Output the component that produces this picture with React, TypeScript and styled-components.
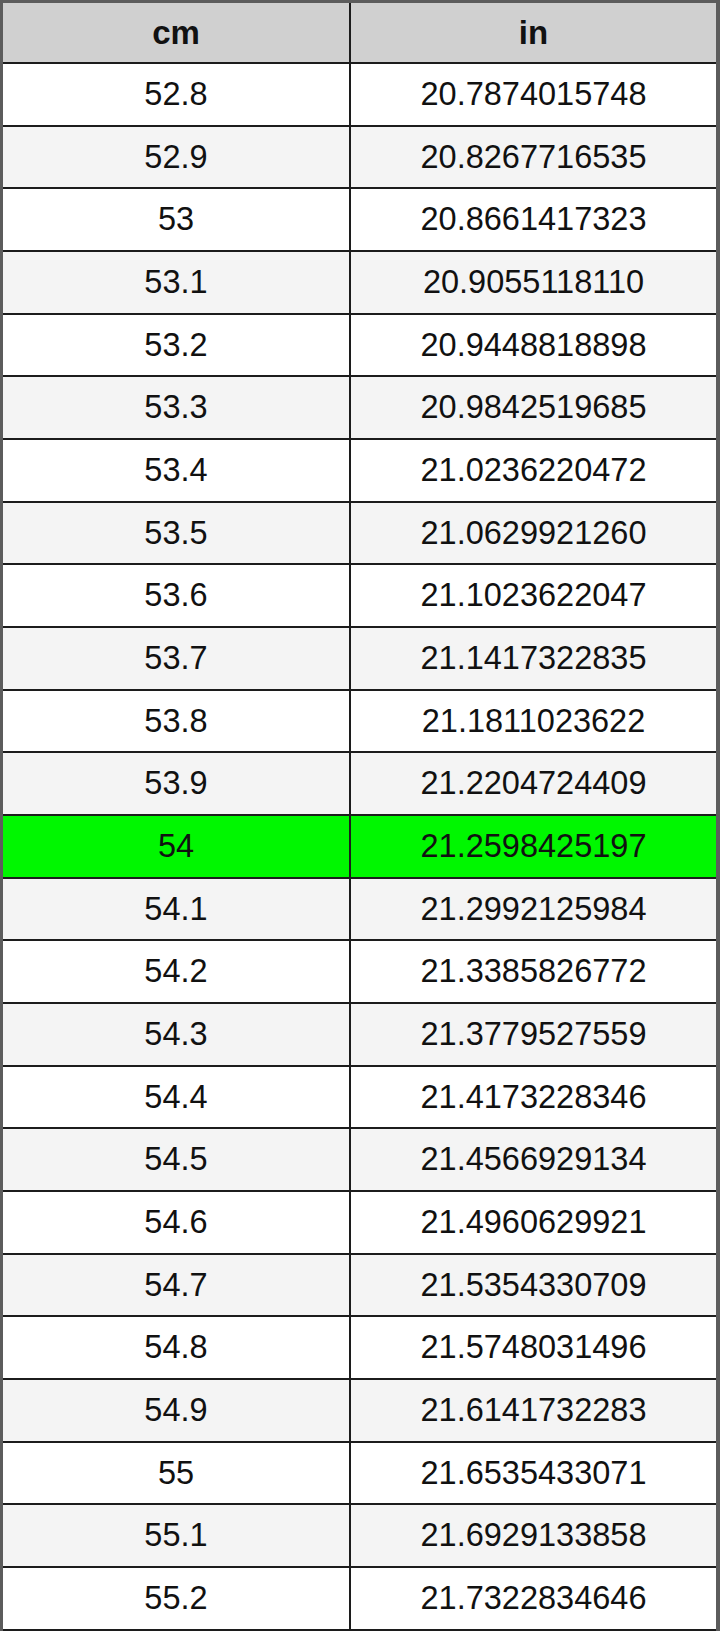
import styled, {createGlobalStyle} from "styled-components";

const GlobalStyle = createGlobalStyle`
  html, body {
    margin: 0;
    padding: 0;
    background: #ffffff;
  }
  body {
    font-family: "Liberation Sans", Arial, sans-serif;
  }
`

const rows: [string, string][] = [
    ["52.8", "20.7874015748"],
    ["52.9", "20.8267716535"],
    ["53", "20.8661417323"],
    ["53.1", "20.9055118110"],
    ["53.2", "20.9448818898"],
    ["53.3", "20.9842519685"],
    ["53.4", "21.0236220472"],
    ["53.5", "21.0629921260"],
    ["53.6", "21.1023622047"],
    ["53.7", "21.1417322835"],
    ["53.8", "21.1811023622"],
    ["53.9", "21.2204724409"],
    ["54", "21.2598425197"],
    ["54.1", "21.2992125984"],
    ["54.2", "21.3385826772"],
    ["54.3", "21.3779527559"],
    ["54.4", "21.4173228346"],
    ["54.5", "21.4566929134"],
    ["54.6", "21.4960629921"],
    ["54.7", "21.5354330709"],
    ["54.8", "21.5748031496"],
    ["54.9", "21.6141732283"],
    ["55", "21.6535433071"],
    ["55.1", "21.6929133858"],
    ["55.2", "21.7322834646"],
];

const Page = styled.div`
  width: 720px;
  height: 1636px;
  background: #fff;
`

const Table = styled.div`
  width: 720px;
  box-sizing: border-box;
  border-top: 3px solid #5c5c5c;
  border-left: 3px solid #5c5c5c;
  border-right: 4px solid #5c5c5c;
  display: flex;
  flex-direction: column;
`

const Row = styled.div<{ $bg: string; $h: number }>`
  display: grid;
  grid-template-columns: 348px 1fr;
  height: ${p => p.$h}px;
  box-sizing: border-box;
  border-bottom: 2px solid #1c1c1c;
  background: ${p => p.$bg};
`

const Cell = styled.div<{ $head?: boolean }>`
  display: flex;
  align-items: center;
  justify-content: center;
  font-size: ${p => (p.$head ? 33 : 32.5)}px;
  font-weight: ${p => (p.$head ? 700 : 400)};
  color: #111;

  &:first-child {
    border-right: 2px solid #1c1c1c;
  }
`

export default function App() {
    return (
        <Page>
            <GlobalStyle/>
            <Table>
                <Row $bg="#d0d0d0" $h={61}>
                    <Cell $head>cm</Cell>
                    <Cell $head>in</Cell>
                </Row>
                {rows.map(([cm, inch], i) => {
                    const bg = cm === "54" ? "#00f700" : i % 2 === 0 ? "#ffffff" : "#f4f4f4";
                    return (
                        <Row key={cm} $bg={bg} $h={62.68}>
                            <Cell>{cm}</Cell>
                            <Cell>{inch}</Cell>
                        </Row>
                    );
                })}
            </Table>
        </Page>
    );
}
